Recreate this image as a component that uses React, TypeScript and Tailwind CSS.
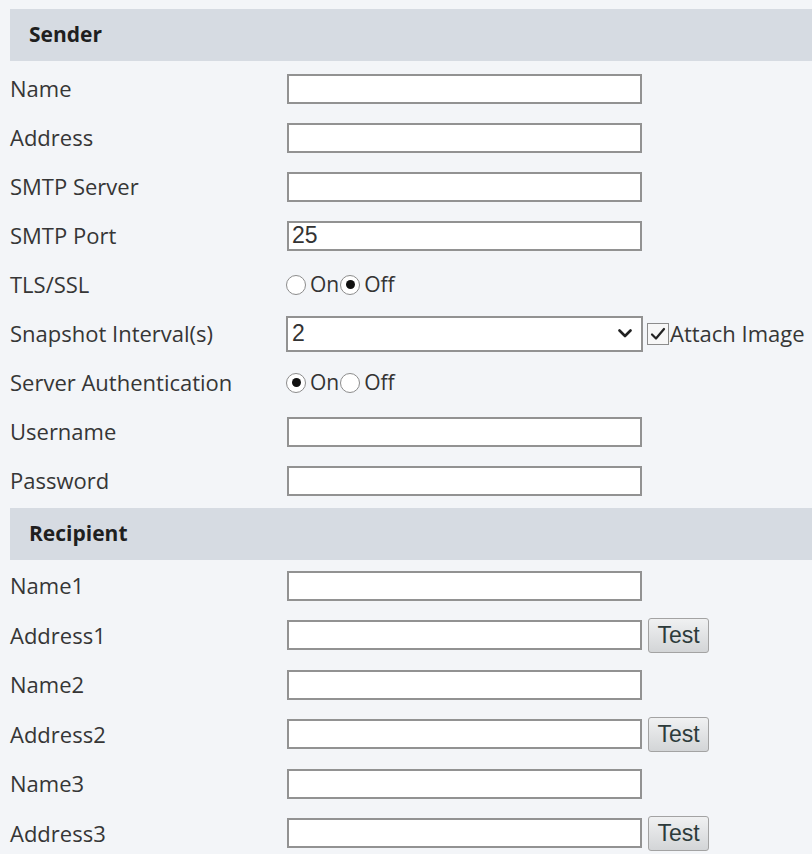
import React from "react";

const labelFont = { fontFamily: '"Open Sans", "Noto Sans", sans-serif' };
const arial = { fontFamily: '"Liberation Sans", Arial, sans-serif' };

function Header({ title }: { title: string }) {
  return (
    <div className="ml-[10px] mt-[3px] h-[52px] bg-[#d6dbe2] flex items-center pl-[19px]">
      <span className="text-[21px] font-bold text-[#1f1f1f]">{title}</span>
    </div>
  );
}

function Row({ label, h = "h-[49px]", children }: { label: string; h?: string; children: React.ReactNode }) {
  return (
    <div className={`flex items-center ${h}`}>
      <div className="w-[277px] ml-[10px] text-[22px] text-[#363636]">{label}</div>
      <div className="flex items-center">{children}</div>
    </div>
  );
}

function TextBox({ value = "" }: { value?: string }) {
  return (
    <div
      className="w-[355px] h-[30px] bg-white border-2 border-[#929292] flex items-center pl-[3px] text-[23px] text-[#333] leading-none"
      style={arial}
    >
      {value}
    </div>
  );
}

function Radio({ checked }: { checked?: boolean }) {
  return (
    <span className="shrink-0 w-[20px] h-[20px] rounded-full border-[1.5px] border-[#8c8c8c] bg-white flex items-center justify-center">
      {checked && <span className="w-[9px] h-[9px] rounded-full bg-[#111]" />}
    </span>
  );
}

function OnOff({ on }: { on: boolean }) {
  return (
    <div className="flex items-center text-[21px] text-[#333] -ml-[1px]">
      <Radio checked={on} />
      <span className="ml-[4px] mr-[1px]">On</span>
      <Radio checked={!on} />
      <span className="ml-[4px]">Off</span>
    </div>
  );
}

function TestButton() {
  return (
    <button
      className="ml-[6px] w-[61px] h-[35px] rounded-[3px] border border-[#a3a3a3] bg-gradient-to-b from-[#f0f1f2] to-[#d3d5d7] text-[23px] text-[#2d3b3b] flex items-center justify-center"
      style={arial}
    >
      Test
    </button>
  );
}

export default function App() {
  return (
    <div className="w-[812px] h-[854px] overflow-hidden bg-[#f3f5f8] pt-[6px]" style={labelFont}>
      <Header title="Sender" />
      <div className="mt-[3px]">
        <Row label="Name"><TextBox /></Row>
        <Row label="Address"><TextBox /></Row>
        <Row label="SMTP Server"><TextBox /></Row>
        <Row label="SMTP Port"><TextBox value="25" /></Row>
        <Row label="TLS/SSL"><OnOff on={false} /></Row>
        <Row label="Snapshot Interval(s)">
          <div
            className="-ml-[1px] w-[357px] h-[36px] bg-white border-2 border-[#929292] flex items-center justify-between pl-[4px] pr-[9px] text-[23px] text-[#333]"
            style={arial}
          >
            <span>2</span>
            <svg width="14" height="9" viewBox="0 0 14 9" fill="none">
              <path d="M1.5 1.5 L7 7 L12.5 1.5" stroke="#222" strokeWidth="2.6" strokeLinecap="round" strokeLinejoin="round" />
            </svg>
          </div>
          <span className="ml-[4px] w-[22px] h-[22px] border border-[#8c8c8c] bg-[#f7f7f7] flex items-center justify-center">
            <svg width="16" height="14" viewBox="0 0 16 14" fill="none">
              <path d="M2 7.5 L6 11.5 L14 2" stroke="#222" strokeWidth="2.2" strokeLinecap="round" strokeLinejoin="round" />
            </svg>
          </span>
          <span className="ml-[1px] text-[22px] text-[#363636] whitespace-nowrap">Attach Image</span>
        </Row>
        <Row label="Server Authentication"><OnOff on={true} /></Row>
        <Row label="Username"><TextBox /></Row>
        <Row label="Password"><TextBox /></Row>
      </div>
      <Header title="Recipient" />
      <div className="mt-[1px]">
        <Row label="Name1" h="h-[49.5px]"><TextBox /></Row>
        <Row label="Address1" h="h-[49.5px]"><TextBox /><TestButton /></Row>
        <Row label="Name2" h="h-[49.5px]"><TextBox /></Row>
        <Row label="Address2" h="h-[49.5px]"><TextBox /><TestButton /></Row>
        <Row label="Name3" h="h-[49.5px]"><TextBox /></Row>
        <Row label="Address3" h="h-[49.5px]"><TextBox /><TestButton /></Row>
      </div>
    </div>
  );
}
